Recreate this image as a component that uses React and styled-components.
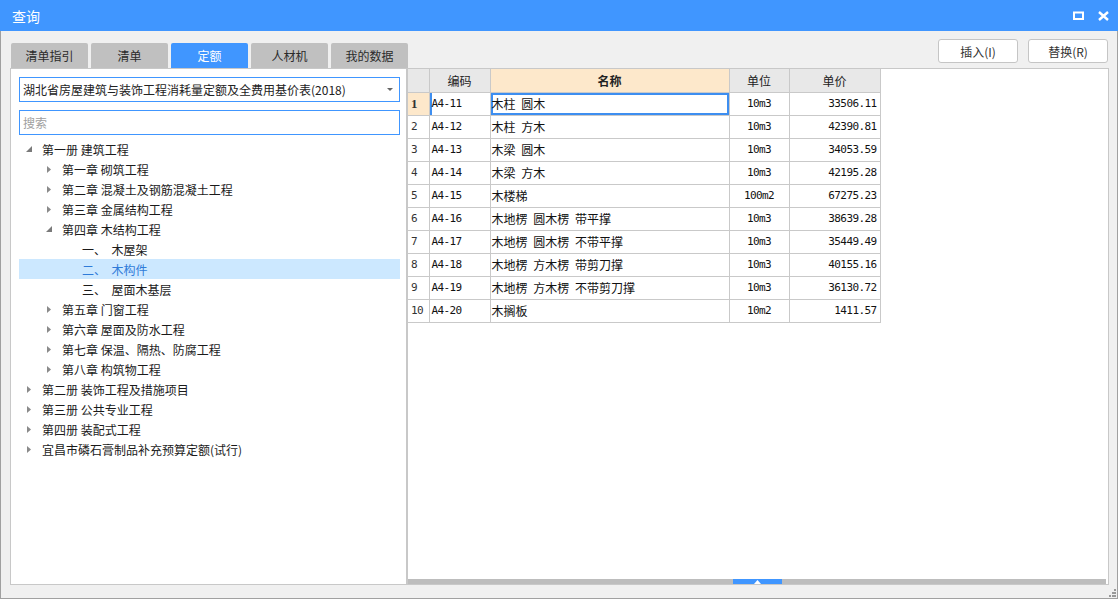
import React from 'react';
import styled, { createGlobalStyle } from 'styled-components';

const GlobalStyle = createGlobalStyle`
  html, body {
    margin: 0;
    padding: 0;
    width: 1118px;
    height: 599px;
    overflow: hidden;
    background: #f0f0f0;
  }
  body {
    font-family: "Noto Sans CJK SC", "Noto Sans", sans-serif;
    font-size: 12px;
    color: #222;
  }
  * { box-sizing: border-box; }
`;

const Window = styled.div`
  width: 1118px;
  height: 599px;
  display: flex;
  flex-direction: column;
  background: #f0f0f0;
`;

const TitleBar = styled.div`
  height: 31px;
  flex: none;
  background: #4096ff;
  color: #fff;
  font-size: 14px;
  display: flex;
  align-items: center;
  justify-content: space-between;
  padding: 0 9px 0 12px;
`;

const TitleIcons = styled.div`
  display: flex;
  align-items: center;
  gap: 14px;
`;

const Body = styled.div`
  flex: 1;
  display: flex;
  flex-direction: column;
  border: 1px solid #a0a0a0;
  border-top: none;
  padding: 0 9px;
  min-height: 0;
`;

const TopRow = styled.div`
  height: 37px;
  flex: none;
  display: flex;
  justify-content: space-between;
`;

const Tabs = styled.div`
  align-self: flex-end;
  display: flex;
  gap: 3px;
  margin-left: 1px;
`;

const Tab = styled.div`
  width: 77px;
  height: 25px;
  display: flex;
  align-items: center;
  justify-content: center;
  border-radius: 2px 2px 0 0;
  background: ${(p) => (p.$active ? '#4096ff' : '#c0c0c0')};
  color: ${(p) => (p.$active ? '#fff' : '#2b2b2b')};
`;

const Buttons = styled.div`
  display: flex;
  gap: 10px;
  margin-top: 8px;
  align-self: flex-start;
`;

const Button = styled.div`
  width: 80px;
  height: 24px;
  display: flex;
  align-items: center;
  justify-content: center;
  background: #fff;
  border: 1px solid #c5c5c5;
  border-radius: 3px;
  color: #333;
`;

const Panels = styled.div`
  flex: 1;
  display: flex;
  min-height: 0;
`;

const LeftPanel = styled.div`
  width: 397px;
  flex: none;
  background: #fff;
  border: 1px solid #c8c8c8;
  padding: 8px 6px 0 8px;
  display: flex;
  flex-direction: column;
`;

const Field = styled.div`
  height: 25px;
  flex: none;
  border: 1px solid #4096ff;
  display: flex;
  align-items: center;
  justify-content: space-between;
  padding: 0 6px 0 3px;
  color: ${(p) => (p.$placeholder ? '#a0a0a0' : '#222')};
  margin-bottom: 8px;
`;

const Caret = styled.span`
  width: 0;
  height: 0;
  border-left: 3px solid transparent;
  border-right: 3px solid transparent;
  border-top: 3px solid #666;
`;

const Tree = styled.div`
  margin-top: -4px;
`;

const TreeRow = styled.div`
  height: 20px;
  display: flex;
  align-items: center;
  padding-left: ${(p) => p.$level * 20}px;
  background: ${(p) => (p.$selected ? '#cce8ff' : 'transparent')};
  color: ${(p) => (p.$selected ? '#2f7bd9' : '#1a1a1a')};
  white-space: pre;
`;

const Toggle = styled.span`
  width: 20px;
  height: 20px;
  flex: none;
  display: flex;
  align-items: center;
  justify-content: center;
  margin-right: 3px;
`;

const RightPanel = styled.div`
  flex: 1;
  margin-right: -1px;
  background: #fff;
  border: 1px solid #c8c8c8;
  display: flex;
  flex-direction: column;
  min-width: 0;
`;

const TableArea = styled.div`
  flex: 1;
  min-height: 0;
`;

const Grid = styled.table`
  border-collapse: collapse;
  table-layout: fixed;
  width: 472px;
`;

const HeadCell = styled.th`
  height: 23px;
  padding: 0;
  border: 1px solid #c9c9c9;
  border-top: none;
  background: ${(p) => (p.$hot ? '#fde8cb' : '#e8e8e8')};
  font-weight: ${(p) => (p.$hot ? 700 : 400)};
  font-size: 12px;
  color: #222;
  text-align: center;
  &:first-child { border-left: none; }
`;

const Cell = styled.td`
  height: 23px;
  padding: 0 ${(p) => (p.$align === 'right' ? '3px' : '0')} 0 ${(p) => (p.$align === 'left' ? '2px' : '0')};
  border: 1px solid #c9c9c9;
  text-align: ${(p) => p.$align || 'left'};
  white-space: pre;
  overflow: hidden;
  &:first-child { border-left: none; }
`;

const NumCell = styled(Cell)`
  padding-left: 3px;
  background: ${(p) => (p.$current ? '#fde8cb' : '#fff')};
  font-family: ${(p) => (p.$current ? '"Liberation Serif", serif' : '"DejaVu Sans Mono", monospace')};
  font-weight: ${(p) => (p.$current ? 700 : 400)};
  font-size: ${(p) => (p.$current ? '13px' : '11px')};
  letter-spacing: -0.6px;
  color: #333;
`;

const MonoCell = styled(Cell)`
  font-family: "DejaVu Sans Mono", monospace;
  font-size: 11px;
  letter-spacing: -0.6px;
  color: #111;
  ${(p) => p.$marked && 'box-shadow: inset 2px 0 0 #3d8ef0;'}
`;

const NameCell = styled(Cell)`
  padding-left: 1px;
  word-spacing: 3px;
  color: #111;
  ${(p) => p.$selected && 'box-shadow: inset 0 0 0 2px #3d8ef0;'}
`;

const HScroll = styled.div`
  height: 5px;
  flex: none;
  background: #bdbdbd;
  display: flex;
  margin-right: 2px;
`;

const ScrollThumb = styled.div`
  width: 49px;
  margin-left: 325px;
  background: #4096ff;
  display: flex;
  align-items: center;
  justify-content: center;
`;

const Footer = styled.div`
  height: 13px;
  flex: none;
  display: flex;
  justify-content: flex-end;
  align-items: flex-end;
  margin-right: -8px;
  padding-bottom: 1px;
`;

const ExpandedIcon = () => (
  <svg width="6" height="6" viewBox="0 0 6 6"><polygon points="6,0 6,6 0,6" fill="#7a7a7a" /></svg>
);

const CollapsedIcon = () => (
  <svg width="4" height="7" viewBox="0 0 4 7"><polygon points="0,0 4,3.5 0,7" fill="#8a8a8a" /></svg>
);

const treeItems = [
  { level: 0, text: '第一册 建筑工程', state: 'open' },
  { level: 1, text: '第一章 砌筑工程', state: 'closed' },
  { level: 1, text: '第二章 混凝土及钢筋混凝土工程', state: 'closed' },
  { level: 1, text: '第三章 金属结构工程', state: 'closed' },
  { level: 1, text: '第四章 木结构工程', state: 'open' },
  { level: 2, text: '一、  木屋架' },
  { level: 2, text: '二、  木构件', selected: true },
  { level: 2, text: '三、  屋面木基层' },
  { level: 1, text: '第五章 门窗工程', state: 'closed' },
  { level: 1, text: '第六章 屋面及防水工程', state: 'closed' },
  { level: 1, text: '第七章 保温、隔热、防腐工程', state: 'closed' },
  { level: 1, text: '第八章 构筑物工程', state: 'closed' },
  { level: 0, text: '第二册 装饰工程及措施项目', state: 'closed' },
  { level: 0, text: '第三册 公共专业工程', state: 'closed' },
  { level: 0, text: '第四册 装配式工程', state: 'closed' },
  { level: 0, text: '宜昌市磷石膏制品补充预算定额(试行)', state: 'closed' },
];

const rows = [
  ['A4-11', '木柱 圆木', '10m3', '33506.11'],
  ['A4-12', '木柱 方木', '10m3', '42390.81'],
  ['A4-13', '木梁 圆木', '10m3', '34053.59'],
  ['A4-14', '木梁 方木', '10m3', '42195.28'],
  ['A4-15', '木楼梯', '100m2', '67275.23'],
  ['A4-16', '木地楞 圆木楞 带平撑', '10m3', '38639.28'],
  ['A4-17', '木地楞 圆木楞 不带平撑', '10m3', '35449.49'],
  ['A4-18', '木地楞 方木楞 带剪刀撑', '10m3', '40155.16'],
  ['A4-19', '木地楞 方木楞 不带剪刀撑', '10m3', '36130.72'],
  ['A4-20', '木搁板', '10m2', '1411.57'],
];

const tabs = ['清单指引', '清单', '定额', '人材机', '我的数据'];

export default function App() {
  return (
    <>
      <GlobalStyle />
      <Window>
        <TitleBar>
          <span>查询</span>
          <TitleIcons>
            <svg width="11" height="9" viewBox="0 0 11 9">
              <rect x="1" y="1.5" width="9" height="6.5" fill="none" stroke="#fff" strokeWidth="2" />
            </svg>
            <svg width="11" height="10" viewBox="0 0 11 10">
              <path d="M1 1 L10 9 M10 1 L1 9" stroke="#fff" strokeWidth="2.4" />
            </svg>
          </TitleIcons>
        </TitleBar>
        <Body>
          <TopRow>
            <Tabs>
              {tabs.map((t) => (
                <Tab key={t} $active={t === '定额'}>{t}</Tab>
              ))}
            </Tabs>
            <Buttons>
              <Button>插入(I)</Button>
              <Button>替换(R)</Button>
            </Buttons>
          </TopRow>
          <Panels>
            <LeftPanel>
              <Field>
                <span>湖北省房屋建筑与装饰工程消耗量定额及全费用基价表(2018)</span>
                <Caret />
              </Field>
              <Field $placeholder>搜索</Field>
              <Tree>
                {treeItems.map((item) => (
                  <TreeRow key={item.text} $level={item.level} $selected={item.selected}>
                    <Toggle>
                      {item.state === 'open' && <ExpandedIcon />}
                      {item.state === 'closed' && <CollapsedIcon />}
                    </Toggle>
                    {item.text}
                  </TreeRow>
                ))}
              </Tree>
            </LeftPanel>
            <RightPanel>
              <TableArea>
                <Grid>
                  <colgroup>
                    <col style={{ width: 21 }} />
                    <col style={{ width: 61 }} />
                    <col style={{ width: 239 }} />
                    <col style={{ width: 60 }} />
                    <col style={{ width: 91 }} />
                  </colgroup>
                  <thead>
                    <tr>
                      <HeadCell />
                      <HeadCell>编码</HeadCell>
                      <HeadCell $hot>名称</HeadCell>
                      <HeadCell>单位</HeadCell>
                      <HeadCell>单价</HeadCell>
                    </tr>
                  </thead>
                  <tbody>
                    {rows.map((r, i) => (
                      <tr key={r[0]}>
                        <NumCell $current={i === 0}>{i + 1}</NumCell>
                        <MonoCell $align="left" $marked={i === 0}>{r[0]}</MonoCell>
                        <NameCell $selected={i === 0}>{r[1]}</NameCell>
                        <MonoCell $align="center">{r[2]}</MonoCell>
                        <MonoCell $align="right">{r[3]}</MonoCell>
                      </tr>
                    ))}
                  </tbody>
                </Grid>
              </TableArea>
              <HScroll>
                <ScrollThumb>
                  <svg width="7" height="4" viewBox="0 0 7 4">
                    <polygon points="3.5,0 7,4 0,4" fill="#fff" />
                  </svg>
                </ScrollThumb>
              </HScroll>
            </RightPanel>
          </Panels>
          <Footer>
            <svg width="7" height="9" viewBox="0 0 7 9">
              <rect x="5" y="1" width="2" height="2" fill="#999" />
              <rect x="3" y="4" width="2" height="2" fill="#999" />
              <rect x="5" y="4" width="2" height="2" fill="#999" />
              <rect x="0" y="7" width="2" height="2" fill="#999" />
              <rect x="3" y="7" width="2" height="2" fill="#999" />
              <rect x="5" y="7" width="2" height="2" fill="#999" />
            </svg>
          </Footer>
        </Body>
      </Window>
    </>
  );
}
